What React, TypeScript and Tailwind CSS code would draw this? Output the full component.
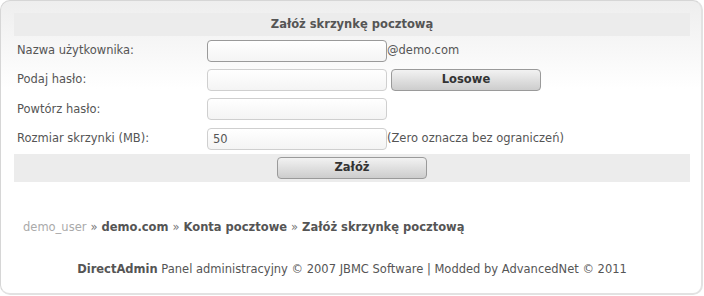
import React from 'react';

const font = "font-['DejaVu_Sans','Verdana',sans-serif]";

function Field({ value = '', focused = false }: { value?: string; focused?: boolean }) {
  return (
    <input
      readOnly
      value={value}
      className={
        'w-[180px] h-[22px] rounded-[4px] border px-[5px] text-[11.5px] text-[#555] outline-none bg-gradient-to-b from-white to-[#f4f4f4] ' +
        (focused ? 'border-[#9a9a9a]' : 'border-[#cfcfcf]')
      }
    />
  );
}

function Btn({ children }: { children: React.ReactNode }) {
  return (
    <button className="w-[150px] h-[22px] rounded-[4px] border border-[#9a9a9a] bg-gradient-to-b from-[#f2f2f2] to-[#cdcdcd] text-[11.5px] font-bold text-[#333]">
      {children}
    </button>
  );
}

function Row({ label, children }: { label: string; children: React.ReactNode }) {
  return (
    <div className="flex items-center h-[29.4px]">
      <div className="w-[193px] pl-[3px]">{label}</div>
      <div className="flex items-center">{children}</div>
    </div>
  );
}

export default function App() {
  return (
    <div className={`w-[704px] h-[296px] bg-white ${font} text-[11.5px] text-[#555]`}>
      <div className="w-[703px] h-[295px] rounded-[10px] border border-[#d6d6d6] border-r-2 border-b-2 border-r-[#e2e2e2] border-b-[#e2e2e2] bg-gradient-to-b from-[#eeeeee] via-white via-[30%] to-white pt-[12px] pl-[13px] pr-[11px]">
        <div className="h-[23px] bg-[#ececec] flex items-center justify-center font-bold">
          Załóż skrzynkę pocztową
        </div>
        <Row label="Nazwa użytkownika:">
          <Field focused />
          <span>@demo.com</span>
        </Row>
        <Row label="Podaj hasło:">
          <Field />
          <span className="ml-[4px]">
            <Btn>Losowe</Btn>
          </span>
        </Row>
        <Row label="Powtórz hasło:">
          <Field />
        </Row>
        <Row label="Rozmiar skrzynki (MB):">
          <Field value="50" />
          <span>(Zero oznacza bez ograniczeń)</span>
        </Row>
        <div className="h-[28px] bg-[#ececec] flex items-center justify-center">
          <Btn>Załóż</Btn>
        </div>
        <div className="mt-[38px] pl-[9px] h-[16px] flex items-center">
          <span className="text-[#aaa]">demo_user</span>
          <span className="text-[#777] mx-[4px]">»</span>
          <span className="font-bold">demo.com</span>
          <span className="text-[#777] mx-[4px]">»</span>
          <span className="font-bold">Konta pocztowe</span>
          <span className="text-[#777] mx-[4px]">»</span>
          <span className="font-bold">Załóż skrzynkę pocztową</span>
        </div>
        <div className="mt-[26px] h-[16px] flex items-center justify-center">
          <span>
            <span className="font-bold">DirectAdmin</span> Panel administracyjny © 2007 JBMC Software | Modded by AdvancedNet © 2011
          </span>
        </div>
      </div>
    </div>
  );
}
